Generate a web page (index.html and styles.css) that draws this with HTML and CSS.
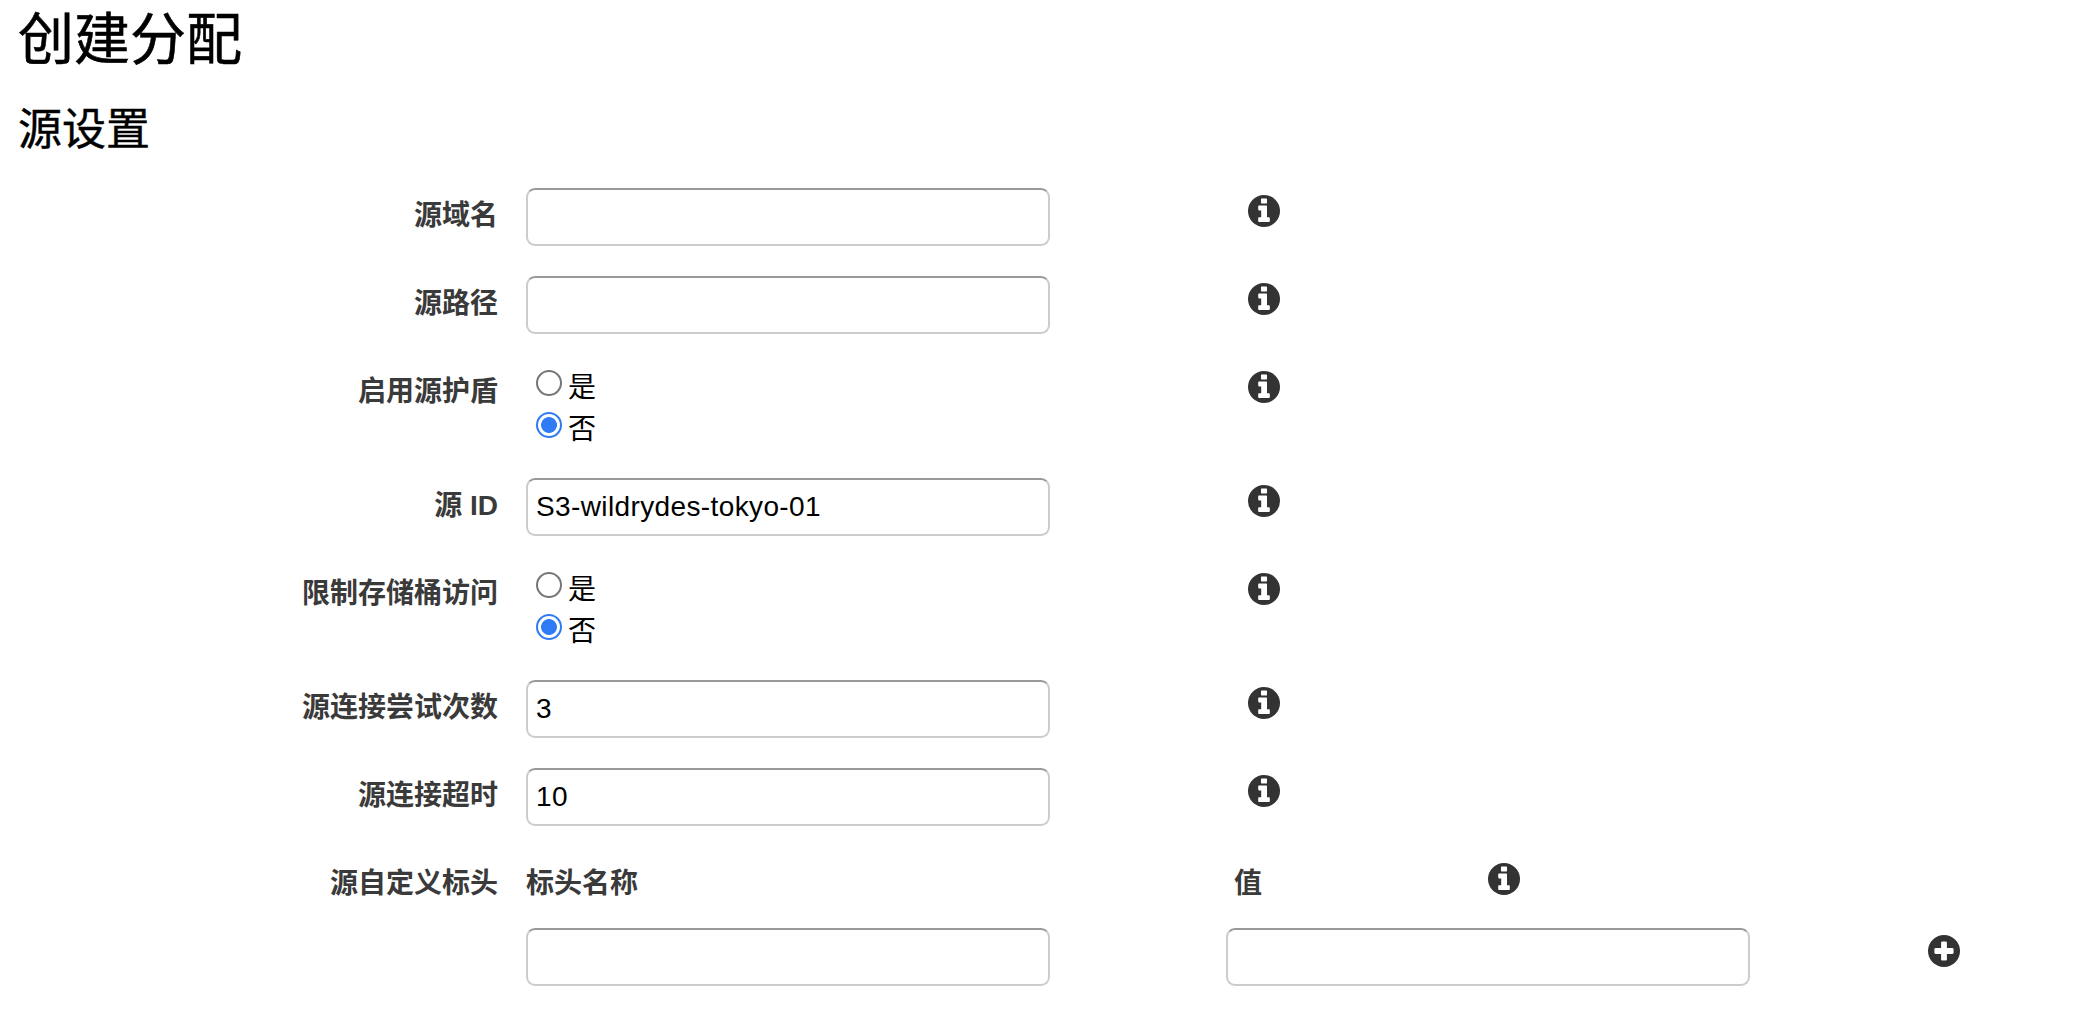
FILE: index.html
```html
<!DOCTYPE html>
<html lang="zh-CN">
<head>
<meta charset="utf-8">
<title>创建分配</title>
<link rel="stylesheet" href="styles.css">
</head>
<body>
<svg class="sprite" aria-hidden="true">
  <symbol id="info" viewBox="0 0 32 32">
    <circle cx="16" cy="16" r="16" fill="#333"/>
    <path fill="#fff" d="M13.600 3.400h4.800q.6 0 .6.6v3.800q0 .6-.6.6h-4.800q-.6 0-.6-.6V4q0-.6.6-.6zM11 10.400h7.400q.6 0 .6.6v11.200h2q.8 0 .8.8v3.200q0 .8-.8.8H11q-.8 0-.8-.8V23q0-.8.8-.8h2.200v-6.800H11q-.8 0-.8-.8v-3.400q0-.8.8-.8z"/>
  </symbol>
  <symbol id="plus" viewBox="0 0 32 32">
    <circle cx="16" cy="16" r="16" fill="#333"/>
    <rect x="13.1" y="6.4" width="5.8" height="19.2" rx="1.3" fill="#fff"/>
    <rect x="6.4" y="13.1" width="19.2" height="5.8" rx="1.3" fill="#fff"/>
  </symbol>
</svg>
<main class="page">
  <h1 class="title">创建分配</h1>
  <h2 class="section-title">源设置</h2>
  <form class="form">
    <div class="row">
      <label class="label" for="domain">源域名</label>
      <input class="field" id="domain" type="text">
      <svg class="icon"><use href="#info"/></svg>
    </div>
    <div class="row">
      <label class="label" for="path">源路径</label>
      <input class="field" id="path" type="text">
      <svg class="icon"><use href="#info"/></svg>
    </div>
    <div class="row row-choice">
      <span class="label">启用源护盾</span>
      <div class="choices">
        <label class="choice"><input class="radio" type="radio" name="shield">是</label>
        <label class="choice"><input class="radio" type="radio" name="shield" checked>否</label>
      </div>
      <svg class="icon"><use href="#info"/></svg>
    </div>
    <div class="row">
      <label class="label" for="origin-id">源 ID</label>
      <input class="field" id="origin-id" type="text" value="S3-wildrydes-tokyo-01">
      <svg class="icon"><use href="#info"/></svg>
    </div>
    <div class="row row-choice">
      <span class="label">限制存储桶访问</span>
      <div class="choices">
        <label class="choice"><input class="radio" type="radio" name="restrict">是</label>
        <label class="choice"><input class="radio" type="radio" name="restrict" checked>否</label>
      </div>
      <svg class="icon"><use href="#info"/></svg>
    </div>
    <div class="row">
      <label class="label" for="attempts">源连接尝试次数</label>
      <input class="field" id="attempts" type="text" value="3">
      <svg class="icon"><use href="#info"/></svg>
    </div>
    <div class="row">
      <label class="label" for="timeout">源连接超时</label>
      <input class="field" id="timeout" type="text" value="10">
      <svg class="icon"><use href="#info"/></svg>
    </div>
    <div class="row row-headers">
      <span class="label">源自定义标头</span>
      <span class="label label-left">标头名称</span>
      <div class="value-head">
        <span class="label label-left">值</span>
        <svg class="icon"><use href="#info"/></svg>
      </div>
    </div>
    <div class="row row-pair">
      <input class="field" type="text" aria-label="标头名称">
      <input class="field" type="text" aria-label="值">
      <svg class="icon"><use href="#plus"/></svg>
    </div>
  </form>
</main>
</body>
</html>
```

FILE: styles.css
```css
* { box-sizing: border-box; }

body {
  margin: 0;
  background: #fff;
  color: #000;
  font-family: "Liberation Sans", "Noto Sans CJK SC", sans-serif;
  font-size: 28px;
}

.sprite { display: none; }

.page { padding: 2px 18px 0; }

.title {
  margin: 0;
  height: 76px;
  font-size: 56px;
  line-height: 76px;
  font-weight: 400;
  -webkit-text-stroke: 0.6px #000;
}

.section-title {
  margin: 22px 0 28px;
  height: 60px;
  font-size: 44px;
  line-height: 60px;
  font-weight: 400;
  -webkit-text-stroke: 0.4px #000;
}

.form { margin: 0; }

.row {
  display: grid;
  grid-template-columns: 480px 524px 32px;
  column-gap: 28px;
  align-items: start;
  height: 88px;
}

.row > .icon { margin-left: 170px; }

.row-choice { height: 114px; }

.label {
  padding-top: 8px;
  color: #3a3a3a;
  font-weight: 700;
  line-height: 40px;
  text-align: right;
  white-space: nowrap;
}

.label-left { text-align: left; }

.field {
  width: 524px;
  height: 58px;
  margin: 0;
  padding: 0 8px;
  border: 2px solid #ccc;
  border-top-color: #999;
  border-radius: 9px;
  background: #fff;
  color: #000;
  font: inherit;
  letter-spacing: 0.38px;
}

.icon {
  display: block;
  width: 32px;
  height: 32px;
  margin-top: 6.5px;
}

.choices { padding: 2px 0 0 10px; }

.choice {
  display: flex;
  height: 42px;
  line-height: 44px;
}

.radio {
  appearance: none;
  width: 26px;
  height: 26px;
  margin: 4px 6px 0 0;
  border: 2px solid #767676;
  border-radius: 50%;
  background: #fff;
}

.radio:checked {
  border-color: #2f7bf6;
  background: radial-gradient(circle, #2f7bf6 7.5px, #fff 8.3px);
}

.row-headers {
  grid-template-columns: 480px 680px 300px;
  height: 72px;
}

.value-head {
  display: grid;
  grid-template-columns: 226px 32px;
  column-gap: 28px;
}

.row-pair {
  grid-template-columns: 524px 524px 32px;
  column-gap: 176px;
  padding-left: 508px;
}

.row-pair > .icon { margin-left: 2px; }
```
